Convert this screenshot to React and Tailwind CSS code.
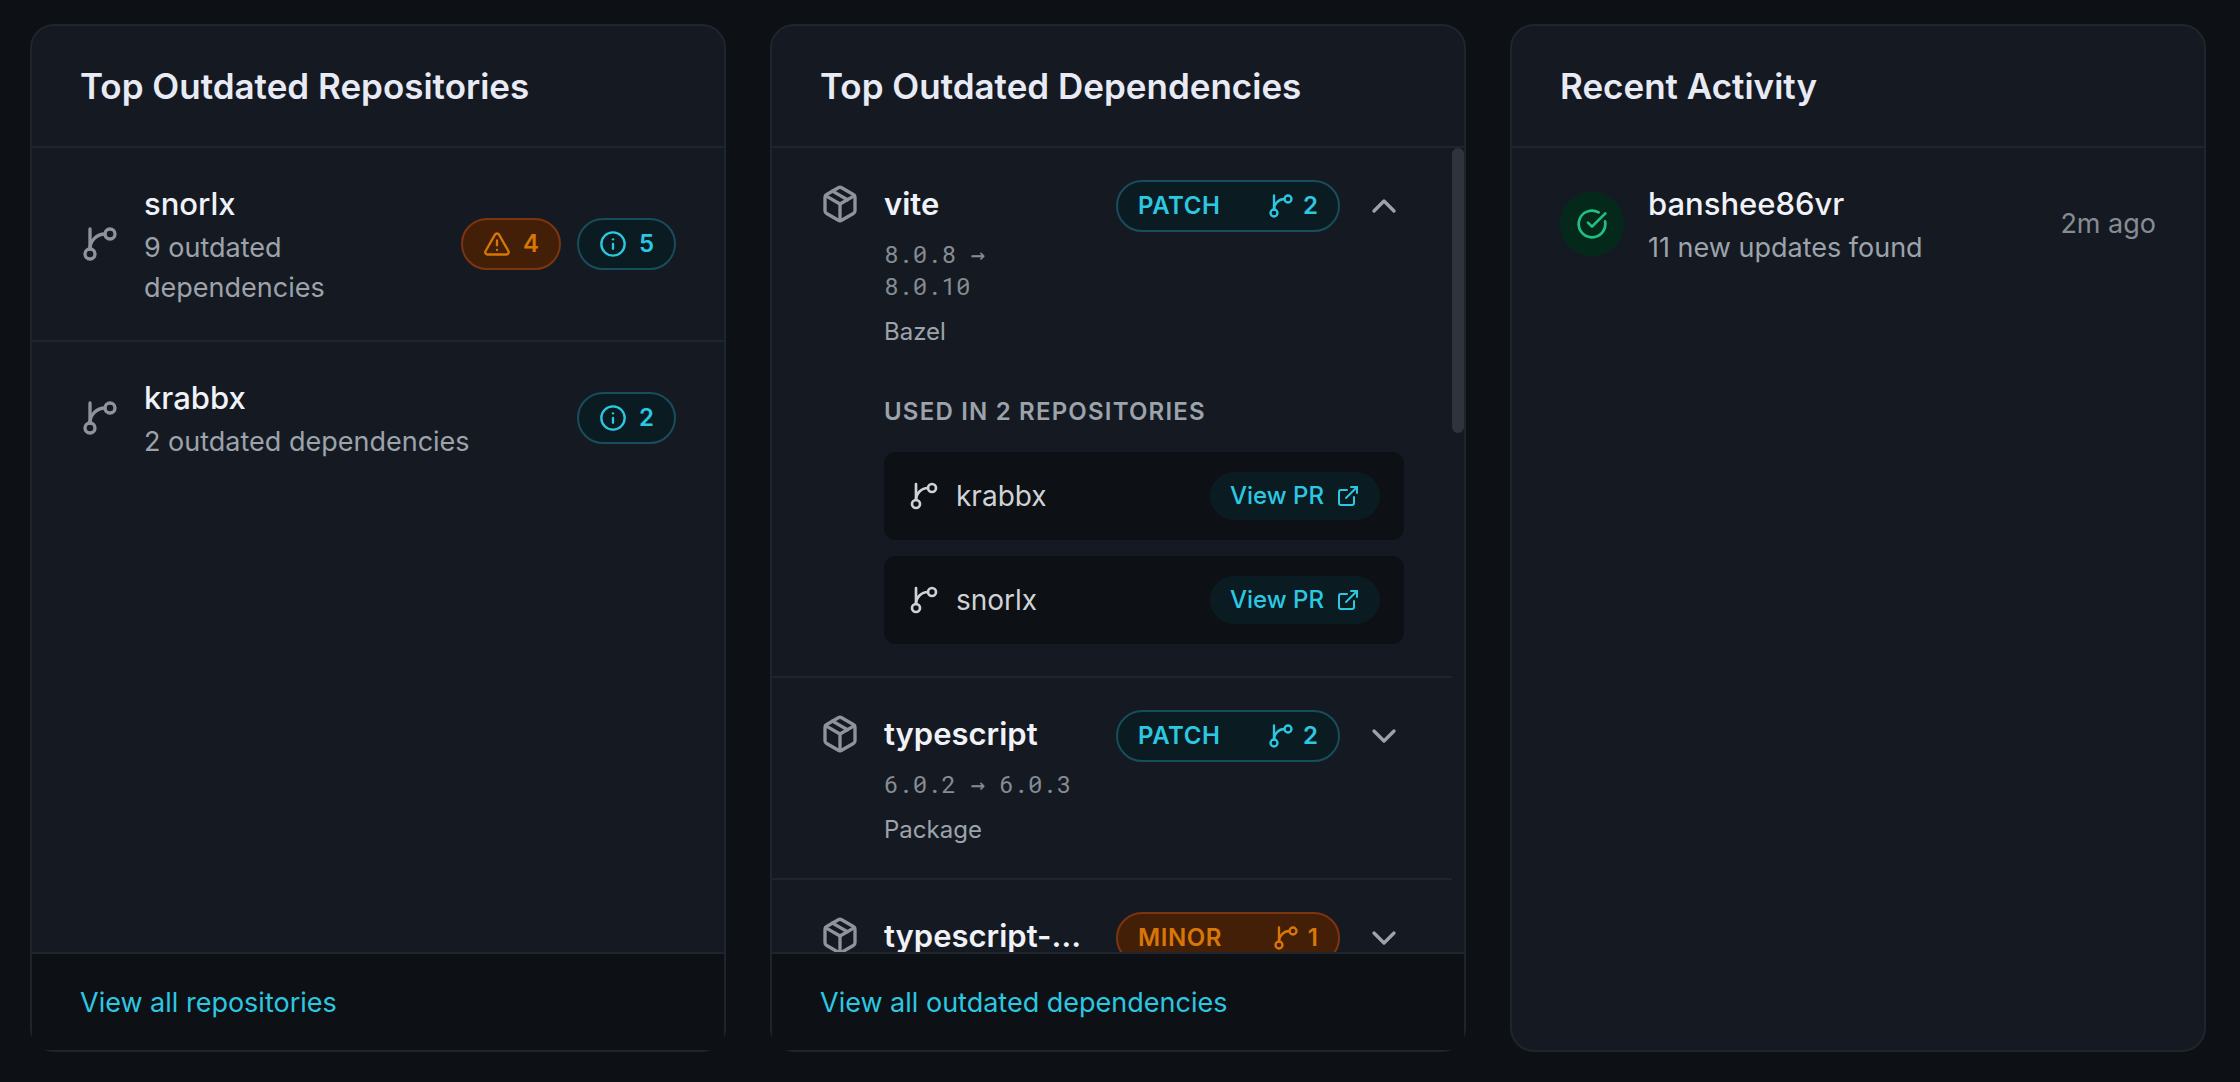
import React, { useState } from "react";

const repositories = [
  { name: "snorlx", outdated: 9, minor: 4, patch: 5 },
  { name: "krabbx", outdated: 2, minor: 0, patch: 2 },
];

const dependencies = [
  { name: "vite", from: "8.0.8", to: "8.0.10", ecosystem: "Bazel", level: "PATCH", repos: ["krabbx", "snorlx"] },
  { name: "typescript", from: "6.0.2", to: "6.0.3", ecosystem: "Package", level: "PATCH", repos: ["krabbx", "snorlx"] },
  { name: "typescript-eslint", from: "8.58.0", to: "8.59.0", ecosystem: "Package", level: "MINOR", repos: ["snorlx"] },
];

const activity = [{ user: "banshee86vr", text: "11 new updates found", time: "2m ago" }];

const levelStyles = {
  PATCH: "bg-[#0b1b22] border-[#184d5b] text-[#2cc8e2]",
  MINOR: "bg-[#431f07] border-[#7c3510] text-[#d97706]",
};

const Icon = ({ className, children }) => (
  <svg
    className={className}
    viewBox="0 0 24 24"
    fill="none"
    stroke="currentColor"
    strokeWidth={2}
    strokeLinecap="round"
    strokeLinejoin="round"
    aria-hidden="true"
  >
    {children}
  </svg>
);

const BranchIcon = ({ className }) => (
  <Icon className={className}>
    <path d="M6 3v12" />
    <circle cx="18" cy="6" r="3" />
    <circle cx="6" cy="18" r="3" />
    <path d="M15 6a9 9 0 0 0-9 9" />
  </Icon>
);

const PackageIcon = ({ className }) => (
  <Icon className={className}>
    <path d="M11 21.73a2 2 0 0 0 2 0l7-4A2 2 0 0 0 21 16V8a2 2 0 0 0-1-1.73l-7-4a2 2 0 0 0-2 0l-7 4A2 2 0 0 0 3 8v8a2 2 0 0 0 1 1.73z" />
    <path d="M12 22V12" />
    <path d="m3.3 7 8.7 5 8.7-5" />
    <path d="m7.5 4.27 9 5.15" />
  </Icon>
);

const WarningIcon = ({ className }) => (
  <Icon className={className}>
    <path d="m21.73 18-8-14a2 2 0 0 0-3.48 0l-8 14A2 2 0 0 0 4 21h16a2 2 0 0 0 1.73-3" />
    <path d="M12 9v4" />
    <path d="M12 17h.01" />
  </Icon>
);

const InfoIcon = ({ className }) => (
  <Icon className={className}>
    <circle cx="12" cy="12" r="10" />
    <path d="M12 16v-4" />
    <path d="M12 8h.01" />
  </Icon>
);

const CheckIcon = ({ className }) => (
  <Icon className={className}>
    <path d="M21.801 10A10 10 0 1 1 17 3.335" />
    <path d="m9 11 3 3L22 4" />
  </Icon>
);

const ExternalIcon = ({ className }) => (
  <Icon className={className}>
    <path d="M15 3h6v6" />
    <path d="M10 14 21 3" />
    <path d="M18 13v6a2 2 0 0 1-2 2H5a2 2 0 0 1-2-2V8a2 2 0 0 1 2-2h6" />
  </Icon>
);

const Card = ({ title, footer, children }) => (
  <section className="flex min-w-0 flex-col rounded-3xl border-2 border-[#1f252d] bg-[#151a22]">
    <header className="shrink-0 border-b-2 border-[#1f252d] px-12 py-8">
      <h2 className="text-[35px] leading-[56px] font-semibold text-[#e8ebf5]">{title}</h2>
    </header>
    {children}
    {footer && (
      <footer className="shrink-0 border-t-2 border-[#1f252d] bg-[#0d1014] px-12 pt-[29px] pb-[27px]">
        <a href="#" className="block text-[27px] leading-[40px] text-[#2cc8e2]">
          {footer}
        </a>
      </footer>
    )}
  </section>
);

const CountBadge = ({ level, count, children }) => (
  <span className={`flex h-[52px] items-center gap-3 rounded-full border-2 px-5 text-2xl font-semibold ${levelStyles[level]}`}>
    {children}
    {count}
  </span>
);

const RepositoryRow = ({ repo }) => (
  <li className="flex items-center justify-between gap-6 border-b-2 border-[#1f252d] px-12 py-8 last:border-b-0">
    <div className="flex items-center gap-6">
      <BranchIcon className="size-10 shrink-0 text-[#8f949b]" />
      <div>
        <p className="text-[31px] leading-[48px] font-medium text-[#f0f2f8]">{repo.name}</p>
        <p className="text-[27px] leading-[40px] text-[#9ca3ab]">{`${repo.outdated} outdated dependencies`}</p>
      </div>
    </div>
    <div className="flex shrink-0 gap-4">
      {repo.minor > 0 && (
        <CountBadge level="MINOR" count={repo.minor}>
          <WarningIcon className="size-7" />
        </CountBadge>
      )}
      <CountBadge level="PATCH" count={repo.patch}>
        <InfoIcon className="size-7" />
      </CountBadge>
    </div>
  </li>
);

const DependencyRow = ({ dep, open, onToggle }) => (
  <li className="border-b-2 border-[#1f252d] px-12 py-8 last:border-b-0">
    <div className="flex items-start gap-6">
      <PackageIcon className="mt-1 size-10 shrink-0 text-[#8f949b]" />
      <div className="min-w-0 flex-1">
        <p className="truncate text-[31px] leading-[48px] font-semibold text-[#f0f2f8]">{dep.name}</p>
        <p className="mt-2.5 pr-3 font-['Roboto_Mono','Liberation_Mono',monospace] text-2xl text-[#868c94]">
          {dep.from} <span className="font-['DejaVu_Sans_Mono',monospace] leading-none">→</span> {dep.to}
        </p>
        <p className="mt-3.5 text-2xl text-[#9ca3ab]">{dep.ecosystem}</p>
      </div>
      <span
        className={`flex h-[52px] w-[224px] shrink-0 items-center justify-between rounded-full border-2 px-5 text-2xl font-semibold ${levelStyles[dep.level]}`}
      >
        <span className="tracking-wide">{dep.level}</span>
        <span className="flex items-center gap-2">
          <BranchIcon className="size-7" />
          {dep.repos.length}
        </span>
      </span>
      <button type="button" onClick={onToggle} aria-expanded={open} aria-label={`Toggle ${dep.name}`} className="mt-1.5 shrink-0 text-[#9ca3ab]">
        <Icon className="size-10">{open ? <path d="m18 15-6-6-6 6" /> : <path d="m6 9 6 6 6-6" />}</Icon>
      </button>
    </div>
    {open && (
      <div className="mt-12 pl-16">
        <h3 className="text-2xl font-semibold tracking-wider text-[#9ca3ab]">{`USED IN ${dep.repos.length} REPOSITORIES`}</h3>
        <ul className="mt-6 flex flex-col gap-4">
          {dep.repos.map((repo) => (
            <li key={repo} className="flex items-center justify-between rounded-xl bg-[#0d1014] px-6 py-5">
              <span className="flex items-center gap-4 text-[28px] leading-[40px] text-[#d0d3d6]">
                <BranchIcon className="size-8" />
                {repo}
              </span>
              <a href="#" className="flex items-center gap-3 rounded-full bg-[#0b1b22] px-5 py-2 text-2xl font-medium text-[#2cc8e2]">
                View PR
                <ExternalIcon className="size-6" />
              </a>
            </li>
          ))}
        </ul>
      </div>
    )}
  </li>
);

const App = () => {
  const [openDep, setOpenDep] = useState("vite");

  return (
    <main className="min-h-screen bg-[#0d1014] pt-6 pr-[34px] pb-[30px] pl-[30px] font-['Inter','Liberation_Sans',sans-serif]">
      <div className="grid h-[calc(100vh-54px)] grid-cols-3 grid-rows-1 gap-11">
        <Card title="Top Outdated Repositories" footer="View all repositories">
          <ul className="min-h-0 flex-1">
            {repositories.map((repo) => (
              <RepositoryRow key={repo.name} repo={repo} />
            ))}
          </ul>
        </Card>

        <Card title="Top Outdated Dependencies" footer="View all outdated dependencies">
          <div className="flex min-h-0 flex-1">
            <ul className="min-w-0 flex-1 overflow-hidden">
              {dependencies.map((dep) => (
                <DependencyRow
                  key={dep.name}
                  dep={dep}
                  open={openDep === dep.name}
                  onToggle={() => setOpenDep(openDep === dep.name ? null : dep.name)}
                />
              ))}
            </ul>
            <div className="w-3 shrink-0">
              <div className="h-[285px] rounded-full bg-[#2f343c]" />
            </div>
          </div>
        </Card>

        <Card title="Recent Activity">
          <ul className="min-h-0 flex-1">
            {activity.map((item) => (
              <li key={item.user} className="flex items-center gap-6 px-12 py-8">
                <span className="flex size-16 shrink-0 items-center justify-center rounded-full bg-[#04291a] text-[#1fc183]">
                  <CheckIcon className="size-8" />
                </span>
                <div className="min-w-0 flex-1">
                  <p className="text-[31px] leading-[48px] font-medium text-[#f0f2f8]">{item.user}</p>
                  <p className="text-[27px] leading-[40px] text-[#9ca3ab]">{item.text}</p>
                </div>
                <time className="text-[27px] leading-[40px] text-[#868c94]">{item.time}</time>
              </li>
            ))}
          </ul>
        </Card>
      </div>
    </main>
  );
};

export default App;
